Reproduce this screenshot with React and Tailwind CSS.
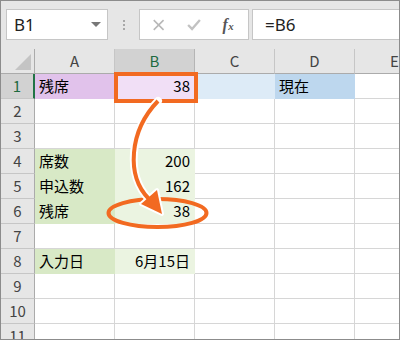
const font = { fontFamily: '"Noto Sans CJK JP", "Noto Sans", sans-serif' };

const cols = ["A", "B", "C", "D", "E"];

// セルの内容と塗り色
const rows = [
  { n: 1, cells: [{ t: "残席", bg: "bg-[#e1c2eb] border-[#e1c2eb]" }, { t: "38", r: true, bg: "bg-[#f1dff6] border-[#f1dff6]" }, { bg: "bg-[#ddebf7] border-[#ddebf7]" }, { t: "現在", bg: "bg-[#bdd7ee] border-[#bdd7ee]" }, {}] },
  { n: 2, cells: [{}, {}, {}, {}, {}] },
  { n: 3, cells: [{}, {}, {}, {}, {}] },
  { n: 4, cells: [{ t: "席数", bg: "bg-[#d8e9c6] border-[#d8e9c6]" }, { t: "200", r: true, bg: "bg-[#ebf4e1] border-[#ebf4e1]" }, {}, {}, {}] },
  { n: 5, cells: [{ t: "申込数", bg: "bg-[#d8e9c6] border-[#d8e9c6]" }, { t: "162", r: true, bg: "bg-[#ebf4e1] border-[#ebf4e1]" }, {}, {}, {}] },
  { n: 6, cells: [{ t: "残席", bg: "bg-[#d8e9c6] border-[#d8e9c6]" }, { t: "38", r: true, bg: "bg-[#ebf4e1] border-[#ebf4e1]" }, {}, {}, {}] },
  { n: 7, cells: [{}, {}, {}, {}, {}] },
  { n: 8, cells: [{ t: "入力日", bg: "bg-[#d8e9c6] border-[#d8e9c6]" }, { t: "6月15日", r: true, bg: "bg-[#ebf4e1] border-[#ebf4e1]" }, {}, {}, {}] },
  { n: 9, cells: [{}, {}, {}, {}, {}] },
  { n: 10, cells: [{}, {}, {}, {}, {}] },
  { n: 11, cells: [{}, {}, {}, {}, {}] },
];

const Toolbar = () => (
  <div className="h-[48px] flex items-center pl-[5px] border-b border-[#e6e6e6]">
    <div className="w-[102px] h-[31px] bg-white border border-[#c6c6c6] flex items-center justify-between pl-[7px] pr-[6px]">
      <span className="text-[17px] text-[#222]" style={{ fontFamily: '"Noto Sans", sans-serif' }}>B1</span>
      <div className="w-0 h-0 border-l-[5px] border-r-[5px] border-t-[5px] border-l-transparent border-r-transparent border-t-[#777]" />
    </div>
    <div className="w-[31px] flex flex-col items-center gap-[2px]">
      <div className="w-[2px] h-[2px] bg-[#a8a8a8]" />
      <div className="w-[2px] h-[2px] bg-[#a8a8a8]" />
      <div className="w-[2px] h-[2px] bg-[#a8a8a8]" />
    </div>
    <div className="w-[110px] h-[31px] bg-white border border-[#c6c6c6] flex items-center">
      <svg width="110" height="29" viewBox="0 0 110 29">
        <path d="M14 10 L24 20 M24 10 L14 20" stroke="#b8b8b8" strokeWidth="1.6" />
        <path d="M49 15 L53 19 L61 10" stroke="#c2c2c2" strokeWidth="2.4" fill="none" />
        <text x="84" y="20" fontFamily="Liberation Serif, serif" fontStyle="italic" fontWeight="bold" fontSize="16" fill="#555">f</text>
        <text x="90" y="20" fontFamily="Liberation Serif, serif" fontStyle="italic" fontWeight="bold" fontSize="11" fill="#555">x</text>
      </svg>
    </div>
    <div className="ml-[3px] flex-1 h-[31px] bg-white border border-[#c6c6c6] border-r-0 flex items-center pl-[12px]">
      <span className="text-[17px] text-[#222]" style={{ fontFamily: '"Noto Sans", sans-serif' }}>=B6</span>
    </div>
  </div>
);

const Row = ({ row }) => (
  <>
    <div
      className={`flex items-center justify-center border-b border-[#c6c6c6] ${row.n === 1 ? "bg-[#d2d2d2] text-[#1e6b3f] border-r-2 border-r-[#217346]" : "bg-[#e6e6e6] text-[#444] border-r border-r-[#ababab]"}`}
    >
      {row.n}
    </div>
    {row.cells.map((cell, i) => (
      <div
        key={i}
        className={`flex items-center border-r border-b px-[4px] ${cell.bg ? cell.bg : "bg-white border-[#d6d6d6]"} ${cell.r ? "justify-end" : "justify-start"}`}
      >
        {cell.t}
      </div>
    ))}
  </>
);

const Grid = () => (
  <div className="grid grid-cols-[34px_80px_80px_80px_80px_80px] auto-rows-[25px] text-[15px] text-black" style={font}>
    <div className="bg-[#e6e6e6] border-r border-b border-[#ababab] flex items-end justify-end pr-[3px] pb-[3px]">
      <div className="w-0 h-0 border-b-[16px] border-l-[16px] border-b-[#c4c4c4] border-l-transparent" />
    </div>
    {cols.map((c) => (
      <div
        key={c}
        className={`flex items-center justify-center border-b border-r ${c === "B" ? "bg-[#d2d2d2] text-[#1e6b3f] border-b-[#217346] border-r-[#b5b5b5]" : "bg-[#e6e6e6] text-[#444] border-b-[#ababab] border-r-[#c6c6c6]"}`}
      >
        {c}
      </div>
    ))}
    {rows.map((row) => (
      <Row key={row.n} row={row} />
    ))}
  </div>
);

const Overlay = () => (
  <svg className="absolute left-0 top-0 pointer-events-none" width="400" height="340" viewBox="0 0 400 340">
    <rect x="115" y="73" width="80" height="27" fill="none" stroke="#f26a21" strokeWidth="4" />
    <ellipse cx="156.5" cy="212" rx="49" ry="14" fill="none" stroke="#f26a21" strokeWidth="4" />
    <path d="M157 100 C128 130 125 175 148 198" fill="none" stroke="#fff" strokeWidth="8" strokeLinecap="round" />
    <polygon points="161,213 140,203 156,189" fill="#fff" stroke="#fff" strokeWidth="4" strokeLinejoin="round" />
    <path d="M157 100 C128 130 125 175 148 198" fill="none" stroke="#f26a21" strokeWidth="4" />
    <polygon points="161,213 140,203 156,189" fill="#f26a21" />
  </svg>
);

export default function App() {
  return (
    <div className="relative w-[400px] h-[340px] overflow-hidden bg-[#e6e6e6] border border-[#8c8c8c]">
      <Toolbar />
      <Grid />
      <Overlay />
    </div>
  );
}
